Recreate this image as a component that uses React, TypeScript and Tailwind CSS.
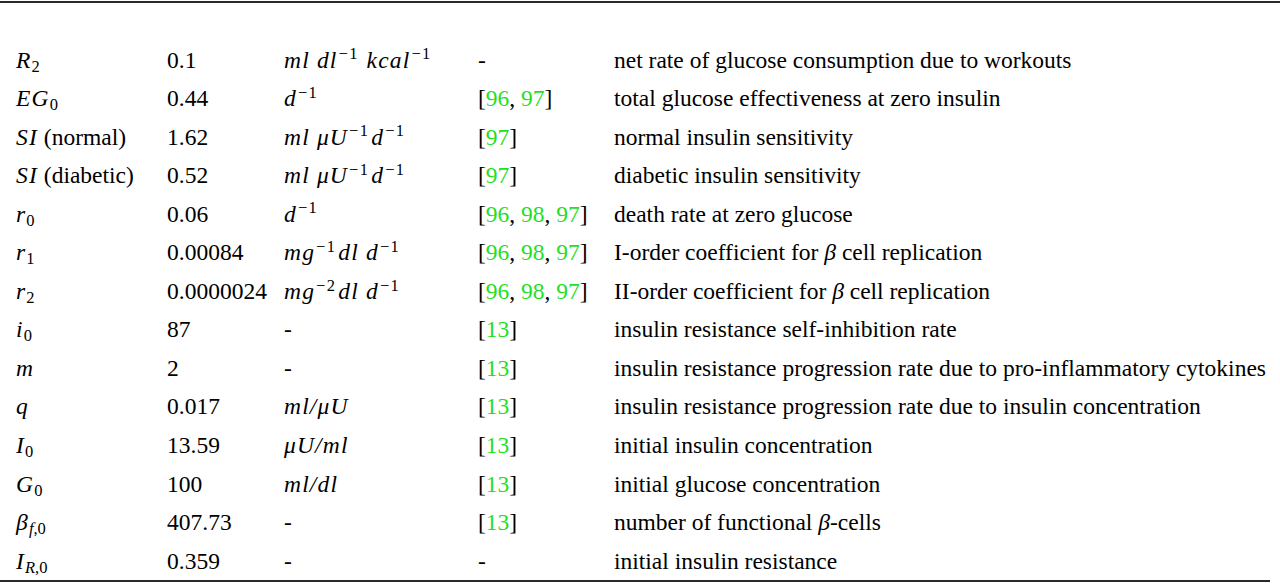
import React from 'react';

type Row = {
  sym: React.ReactNode;
  value: string;
  unit: React.ReactNode;
  refs: string[] | null;
  desc: React.ReactNode;
};

const I = ({ children }: { children: React.ReactNode }) => (
  <span className="italic tracking-[0.05em]">{children}</span>
);
const Sub = ({ children }: { children: React.ReactNode }) => (
  <sub className="text-[16.5px] not-italic tracking-normal">{children}</sub>
);
const SubI = ({ children }: { children: React.ReactNode }) => (
  <sub className="text-[16.5px] italic tracking-normal">{children}</sub>
);
const Sup = ({ children }: { children: React.ReactNode }) => (
  <sup className="text-[16.5px] not-italic tracking-[0.08em] ml-px mr-[2px]">{children}</sup>
);
const beta = <span className="italic">β</span>;

const rows: Row[] = [
  {
    sym: <><I>R</I><Sub>2</Sub></>,
    value: '0.1',
    unit: <><I>ml dl</I><Sup>−1</Sup> <I>kcal</I><Sup>−1</Sup></>,
    refs: null,
    desc: 'net rate of glucose consumption due to workouts',
  },
  {
    sym: <><I>EG</I><Sub>0</Sub></>,
    value: '0.44',
    unit: <><I>d</I><Sup>−1</Sup></>,
    refs: ['96', '97'],
    desc: 'total glucose effectiveness at zero insulin',
  },
  {
    sym: <><I>SI</I> (normal)</>,
    value: '1.62',
    unit: <><I>ml μU</I><Sup>−1</Sup><I>d</I><Sup>−1</Sup></>,
    refs: ['97'],
    desc: 'normal insulin sensitivity',
  },
  {
    sym: <><I>SI</I> (diabetic)</>,
    value: '0.52',
    unit: <><I>ml μU</I><Sup>−1</Sup><I>d</I><Sup>−1</Sup></>,
    refs: ['97'],
    desc: 'diabetic insulin sensitivity',
  },
  {
    sym: <><I>r</I><Sub>0</Sub></>,
    value: '0.06',
    unit: <><I>d</I><Sup>−1</Sup></>,
    refs: ['96', '98', '97'],
    desc: 'death rate at zero glucose',
  },
  {
    sym: <><I>r</I><Sub>1</Sub></>,
    value: '0.00084',
    unit: <><I>mg</I><Sup>−1</Sup><I>dl d</I><Sup>−1</Sup></>,
    refs: ['96', '98', '97'],
    desc: <>I-order coefficient for {beta} cell replication</>,
  },
  {
    sym: <><I>r</I><Sub>2</Sub></>,
    value: '0.0000024',
    unit: <><I>mg</I><Sup>−2</Sup><I>dl d</I><Sup>−1</Sup></>,
    refs: ['96', '98', '97'],
    desc: <>II-order coefficient for {beta} cell replication</>,
  },
  {
    sym: <><I>i</I><Sub>0</Sub></>,
    value: '87',
    unit: '-',
    refs: ['13'],
    desc: 'insulin resistance self-inhibition rate',
  },
  {
    sym: <I>m</I>,
    value: '2',
    unit: '-',
    refs: ['13'],
    desc: 'insulin resistance progression rate due to pro-inflammatory cytokines',
  },
  {
    sym: <I>q</I>,
    value: '0.017',
    unit: <I>ml/μU</I>,
    refs: ['13'],
    desc: 'insulin resistance progression rate due to insulin concentration',
  },
  {
    sym: <><I>I</I><Sub>0</Sub></>,
    value: '13.59',
    unit: <I>μU/ml</I>,
    refs: ['13'],
    desc: 'initial insulin concentration',
  },
  {
    sym: <><I>G</I><Sub>0</Sub></>,
    value: '100',
    unit: <I>ml/dl</I>,
    refs: ['13'],
    desc: 'initial glucose concentration',
  },
  {
    sym: <><I>β</I><SubI>f</SubI><Sub>,0</Sub></>,
    value: '407.73',
    unit: '-',
    refs: ['13'],
    desc: <>number of functional {beta}-cells</>,
  },
  {
    sym: <><I>I</I><SubI>R</SubI><Sub>,0</Sub></>,
    value: '0.359',
    unit: '-',
    refs: null,
    desc: 'initial insulin resistance',
  },
];

const Refs = ({ refs }: { refs: string[] | null }) => {
  if (!refs) return <span>-</span>;
  return (
    <span>
      [
      {refs.map((r, i) => (
        <React.Fragment key={r}>
          <span className="text-[#1fe01f]">{r}</span>
          {i < refs.length - 1 && ', '}
        </React.Fragment>
      ))}
      ]
    </span>
  );
};

export default function App() {
  return (
    <main className="w-[1280px] h-[583px] bg-white text-black font-['Liberation_Serif',serif] text-[23.5px] overflow-hidden">
      <div className="mt-px h-[2px] bg-[#2a2a2a]" />
      <div className="pt-[38px] w-[1270px]">
        {rows.map((row, idx) => (
          <div
            key={idx}
            className="grid grid-cols-[151px_117px_194px_136px_1fr] items-center h-[38.55px] pl-4 leading-none whitespace-nowrap"
          >
            <div>{row.sym}</div>
            <div>{row.value}</div>
            <div>{row.unit}</div>
            <div>
              <Refs refs={row.refs} />
            </div>
            <div>{row.desc}</div>
          </div>
        ))}
        <div className="h-[2px] bg-[#2a2a2a] -mt-px" />
      </div>
    </main>
  );
}
